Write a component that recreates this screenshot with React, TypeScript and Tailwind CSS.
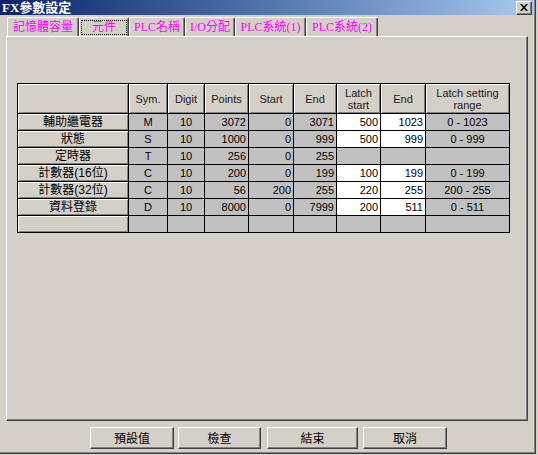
import React from "react";

const cols = [
  "w-[111px]",
  "w-[39px]",
  "w-[37px]",
  "w-[44px]",
  "w-[45px]",
  "w-[43px]",
  "w-[44px]",
  "w-[45px]",
  "w-[84px]",
];

type Row = {
  label: string;
  sym: string;
  digit: string;
  points: string;
  start: string;
  end: string;
  ls: string;
  le: string;
  range: string;
  editable: boolean;
};

const rows: Row[] = [
  { label: "輔助繼電器", sym: "M", digit: "10", points: "3072", start: "0", end: "3071", ls: "500", le: "1023", range: "0 - 1023", editable: true },
  { label: "狀態", sym: "S", digit: "10", points: "1000", start: "0", end: "999", ls: "500", le: "999", range: "0 - 999", editable: true },
  { label: "定時器", sym: "T", digit: "10", points: "256", start: "0", end: "255", ls: "", le: "", range: "", editable: false },
  { label: "計數器(16位)", sym: "C", digit: "10", points: "200", start: "0", end: "199", ls: "100", le: "199", range: "0 - 199", editable: true },
  { label: "計數器(32位)", sym: "C", digit: "10", points: "56", start: "200", end: "255", ls: "220", le: "255", range: "200 - 255", editable: true },
  { label: "資料登錄", sym: "D", digit: "10", points: "8000", start: "0", end: "7999", ls: "200", le: "511", range: "0 - 511", editable: true },
  { label: "", sym: "", digit: "", points: "", start: "", end: "", ls: "", le: "", range: "", editable: false },
];

const fixedCell =
  "border-r border-b border-black bg-[#d4d0c8] shadow-[inset_1px_1px_0_#ffffff,inset_-1px_-1px_0_#808080] flex items-center justify-center";

function HeaderCell({ w, children }: { w: string; children?: React.ReactNode }) {
  return (
    <div className={`${w} h-[30px] ${fixedCell} text-center leading-[12px] text-[#202020]`}>
      {children}
    </div>
  );
}

function DataCell({
  w,
  align,
  white,
  children,
}: {
  w: string;
  align: "right" | "center";
  white?: boolean;
  children?: React.ReactNode;
}) {
  return (
    <div
      className={`${w} h-[17px] border-r border-b border-black flex items-center ${
        align === "right" ? "justify-end pr-[2px]" : "justify-center"
      } ${white ? "bg-white" : "bg-[#c0c0c0]"} leading-none`}
    >
      {children}
    </div>
  );
}

function Tab({
  w,
  children,
  selected,
}: {
  w: string;
  children: React.ReactNode;
  selected?: boolean;
}) {
  return (
    <div
      className={`${w} h-[19px] border-t border-l border-white rounded-tl-[2px] rounded-tr-[2px] border-r border-r-[#404040] shadow-[inset_-1px_0_0_#808080] flex items-center justify-center text-[#ff00ff] text-[12px] leading-none font-['Liberation_Serif','Noto_Sans_CJK_TC',serif]`}
    >
      {selected ? (
        <div className="w-[46px] h-[15px] border border-dotted border-black flex items-center justify-center">
          {children}
        </div>
      ) : (
        children
      )}
    </div>
  );
}

function Button({ w, children }: { w: string; children: React.ReactNode }) {
  return (
    <div
      className={`${w} h-[22px] border-t border-l border-white border-r border-b border-r-[#404040] border-b-[#404040] shadow-[inset_-1px_-1px_0_#808080] bg-[#d4d0c8] flex items-center justify-center text-[12px] text-black leading-none font-['Noto_Sans_CJK_TC',sans-serif]`}
    >
      {children}
    </div>
  );
}

export default function App() {
  return (
    <div className="w-[538px] h-[455px] bg-[#d4d0c8] overflow-hidden font-['Liberation_Sans','Noto_Sans_CJK_TC',sans-serif]">
      <div className="w-[536px] h-[454px] border-r border-b border-[#404040] shadow-[inset_-1px_-1px_0_#808080] flex flex-col">
        {/* Title bar */}
        <div className="h-[15px] w-[534px] bg-linear-to-r from-[#0a246a] to-[#a6caf0] flex items-center justify-between pl-[2px] pr-[2px]">
          <span className="text-white font-bold text-[13px] leading-none font-['Liberation_Serif','Noto_Sans_CJK_TC',serif]">
            FX參數設定
          </span>
          <div className="w-[16px] h-[14px] bg-[#d4d0c8] border-t border-l border-white border-r border-b border-r-[#404040] border-b-[#404040] shadow-[inset_-1px_-1px_0_#808080] flex items-center justify-center">
            <svg width="8" height="7" viewBox="0 0 8 7">
              <path d="M0 0h2l2 2.5L6 0h2L5 3.5 8 7H6L4 4.5 2 7H0l3-3.5z" fill="#000" />
            </svg>
          </div>
        </div>

        {/* Tabs */}
        <div className="mt-[2px] ml-[7px] flex h-[19px]">
          <Tab w="w-[72px]">記憶體容量</Tab>
          <Tab w="w-[50px]" selected>
            元件
          </Tab>
          <Tab w="w-[56px]">PLC名稱</Tab>
          <Tab w="w-[50px]">I/O分配</Tab>
          <Tab w="w-[71px]">PLC系統(1)</Tab>
          <Tab w="w-[72px]">PLC系統(2)</Tab>
        </div>

        {/* Panel */}
        <div className="ml-[6px] w-[522px] h-[385px] border-t border-l border-white border-r border-b border-r-[#404040] border-b-[#404040] shadow-[inset_-1px_-1px_0_#808080] pt-[46px] pl-[10px]">
          <div className="w-[493px] border-t border-l border-black text-[11px] text-black">
            <div className="flex">
              <HeaderCell w={cols[0]} />
              <HeaderCell w={cols[1]}>Sym.</HeaderCell>
              <HeaderCell w={cols[2]}>Digit</HeaderCell>
              <HeaderCell w={cols[3]}>Points</HeaderCell>
              <HeaderCell w={cols[4]}>Start</HeaderCell>
              <HeaderCell w={cols[5]}>End</HeaderCell>
              <HeaderCell w={cols[6]}>
                Latch
                <br />
                start
              </HeaderCell>
              <HeaderCell w={cols[7]}>End</HeaderCell>
              <HeaderCell w={cols[8]}>
                Latch setting
                <br />
                range
              </HeaderCell>
            </div>
            {rows.map((r, i) => (
              <div key={i} className="flex">
                <div className={`${cols[0]} h-[17px] ${fixedCell} text-[12px] leading-none`}>{r.label}</div>
                <DataCell w={cols[1]} align="center">{r.sym}</DataCell>
                <DataCell w={cols[2]} align="center">{r.digit}</DataCell>
                <DataCell w={cols[3]} align="right">{r.points}</DataCell>
                <DataCell w={cols[4]} align="right">{r.start}</DataCell>
                <DataCell w={cols[5]} align="right">{r.end}</DataCell>
                <DataCell w={cols[6]} align="right" white={r.editable}>{r.ls}</DataCell>
                <DataCell w={cols[7]} align="right" white={r.editable}>{r.le}</DataCell>
                <DataCell w={cols[8]} align="center">{r.range}</DataCell>
              </div>
            ))}
          </div>
        </div>

        {/* Buttons */}
        <div className="mt-[6px] ml-[90px] flex">
          <Button w="w-[84px]">預設值</Button>
          <div className="w-[4px]" />
          <Button w="w-[83px]">檢查</Button>
          <div className="w-[6px]" />
          <Button w="w-[91px]">結束</Button>
          <div className="w-[5px]" />
          <Button w="w-[84px]">取消</Button>
        </div>
      </div>
    </div>
  );
}
